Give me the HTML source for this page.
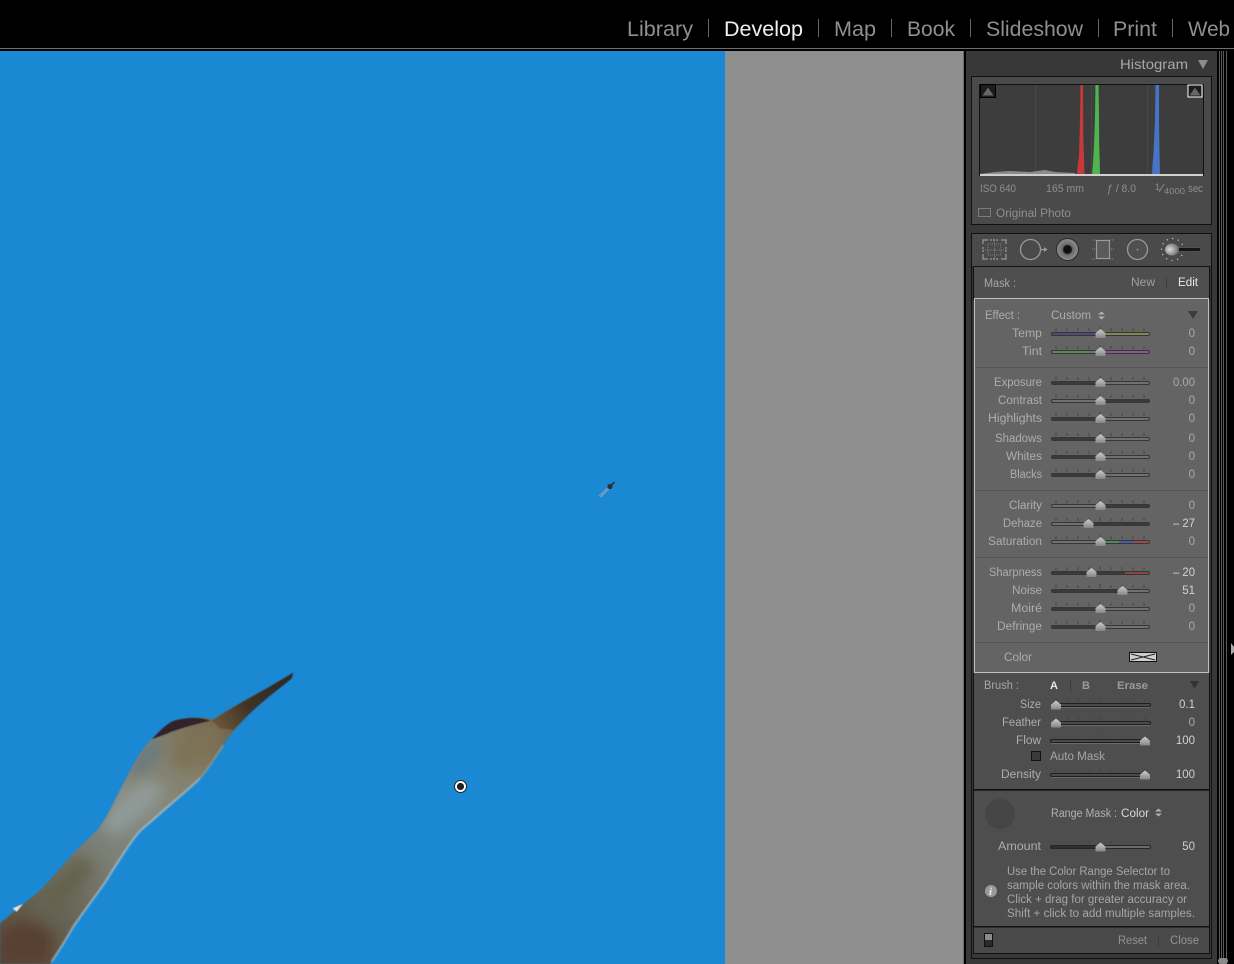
<!DOCTYPE html>
<html><head><meta charset="utf-8"><style>
html,body{margin:0;padding:0;background:#000;width:1234px;height:964px;overflow:hidden}
svg{display:block;filter:blur(.35px)}
text{font-family:"Liberation Sans",sans-serif;font-size:11.5px;fill:#adadad}
.l{text-anchor:end;fill:#adadad}
.v{text-anchor:end;fill:#a9a9a9}
.b{fill:#b2b2b2}
.n{font-size:21px;fill:#8f8f8f}
</style></head><body>
<svg width="1234" height="964" viewBox="0 0 1234 964" xmlns="http://www.w3.org/2000/svg">
<defs>
<linearGradient id="bg" gradientUnits="userSpaceOnUse" x1="0" y1="912" x2="700" y2="180"><stop offset="0" stop-color="#5a4737"/><stop offset=".22" stop-color="#666254"/><stop offset=".45" stop-color="#7b7f75"/><stop offset=".62" stop-color="#868a80"/><stop offset=".8" stop-color="#84806c"/><stop offset="1" stop-color="#6f6048"/></linearGradient>
<linearGradient id="bill" gradientUnits="userSpaceOnUse" x1="880" y1="40" x2="650" y2="190"><stop offset="0" stop-color="#2c2825"/><stop offset=".6" stop-color="#3d3228"/><stop offset="1" stop-color="#6a5636"/></linearGradient>
<linearGradient id="thumb" x1="0" y1="0" x2="0" y2="1"><stop offset="0" stop-color="#cfcfcf"/><stop offset="1" stop-color="#858585"/></linearGradient>
<radialGradient id="brushG" cx=".35" cy=".5" r=".7"><stop offset="0" stop-color="#dcdcdc"/><stop offset="1" stop-color="#5e5e5e"/></radialGradient>
<radialGradient id="eye" cx=".5" cy=".5" r=".5"><stop offset=".35" stop-color="#101010"/><stop offset=".5" stop-color="#6c6c6c"/><stop offset="1" stop-color="#8c8c8c"/></radialGradient>
<filter id="s" x="-50%" y="-50%" width="200%" height="200%"><feGaussianBlur stdDeviation="20"/></filter>
<filter id="s2" x="-20%" y="-20%" width="140%" height="140%"><feGaussianBlur stdDeviation="2"/></filter>
<filter id="s3" x="-5%" y="-5%" width="110%" height="110%"><feGaussianBlur stdDeviation="1.5"/></filter>
<clipPath id="birdClip"><path d="M880 38L875 55C840 85 790 120 745 165C715 195 690 225 670 255C650 285 630 320 600 355C570 385 520 425 470 470C440 497 425 505 410 525C390 550 350 610 320 660C290 705 250 755 220 800C200 835 185 860 150 912H0V790C40 755 80 725 110 700C150 665 195 605 230 570C265 535 285 520 300 500C320 470 335 440 345 420C360 390 395 320 420 280C435 260 445 248 455 238C480 212 505 188 530 180C560 172 610 170 640 178C680 150 760 105 800 85Z"/></clipPath>
<g id="th"><path d="M0-5L5-1V3Q5 4 4 4H-4Q-5 4-5 3V-1Z" fill="url(#thumb)"/></g>
<g id="tk" stroke="#444" stroke-width="1"><path d="M5 -6v3M16 -6v3M27 -6v3M38 -6v3M49 -7v4M60 -6v3M71 -6v3M82 -6v3M93 -6v3"/></g>
</defs>

<rect width="1234" height="964" fill="#000"/>
<rect x="0" y="48" width="1234" height="1" fill="#6e6e6e"/>
<rect x="0" y="51" width="725" height="913" fill="#1a88d2"/>
<rect x="725" y="51" width="238" height="913" fill="#8f8f8f"/>

<!-- nav -->
<text class="n" x="627" y="36" textLength="66" lengthAdjust="spacingAndGlyphs">Library</text>
<text class="n" x="724" y="36" textLength="79" lengthAdjust="spacingAndGlyphs" style="fill:#f0f0f0">Develop</text>
<text class="n" x="834" y="36" textLength="42" lengthAdjust="spacingAndGlyphs">Map</text>
<text class="n" x="907" y="36" textLength="48" lengthAdjust="spacingAndGlyphs">Book</text>
<text class="n" x="986" y="36" textLength="97" lengthAdjust="spacingAndGlyphs">Slideshow</text>
<text class="n" x="1113" y="36" textLength="44" lengthAdjust="spacingAndGlyphs">Print</text>
<text class="n" x="1188" y="36" textLength="42" lengthAdjust="spacingAndGlyphs">Web</text>
<g fill="#666"><rect x="708" y="19" width="1" height="18"/><rect x="818" y="19" width="1" height="18"/><rect x="891" y="19" width="1" height="18"/><rect x="970" y="19" width="1" height="18"/><rect x="1098" y="19" width="1" height="18"/><rect x="1172" y="19" width="1" height="18"/></g>

<!-- bird -->
<g transform="translate(0 660) scale(.33333)">
<g filter="url(#s3)">
<g clip-path="url(#birdClip)">
<rect x="0" y="0" width="930" height="912" fill="url(#bg)"/>
<path d="M455 238L420 280L380 350L430 340L500 260Z" fill="#66787f" filter="url(#s)"/>
<path d="M350 420L300 500L350 530L440 450L500 390L440 360Z" fill="#8f9a98" filter="url(#s)"/>
<path d="M670 200L620 195L540 235L500 300L560 335L630 280Z" fill="#7d7256" filter="url(#s)"/>
<path d="M0 912V810L80 780L160 820L150 912Z" fill="#584131" filter="url(#s)"/>
<path d="M100 720L230 590L290 620L180 760Z" fill="#65634f" filter="url(#s)"/>
</g>
<path d="M600 355C570 385 520 425 470 470C440 497 425 505 410 525C390 550 350 610 320 660C290 705 250 755 220 800C200 835 185 860 155 905" fill="none" stroke="#dfe2dc" stroke-width="4" opacity=".75" filter="url(#s2)"/>
<path d="M670 255C650 285 630 320 600 355" fill="none" stroke="#b5ad92" stroke-width="4" opacity=".7" filter="url(#s2)"/>
<path d="M880 38L875 55C840 85 790 120 745 165L700 210L660 205L635 182L720 130L800 85Z" fill="url(#bill)"/>
<path d="M455 238C480 212 505 185 530 180C560 172 600 170 632 182C590 192 530 208 500 222Z" fill="#33222a"/>
<path d="M38 745L68 732L50 755Z" fill="#e8e8e0"/>
</g>
</g>

<!-- overlays -->
<circle cx="460.500" cy="786.500" r="6" fill="#fff" stroke="#222" stroke-width="1"/>
<circle cx="460.500" cy="786.500" r="3.600" fill="#222"/>
<path d="M600 496.500L608 488.500" stroke="#a5bccc" stroke-width="2.400"/>
<path d="M600 496.500L608 488.500" stroke="#3a5c7a" stroke-width=".7"/>
<circle cx="610" cy="486.500" r="2.600" fill="#26323e"/>
<path d="M610 486.500L614.500 482" stroke="#26323e" stroke-width="1.600"/>

<!-- sidebar -->
<rect x="963" y="49" width="271" height="915" fill="#000"/>
<rect x="966" y="51" width="251" height="913" fill="#383838"/>
<rect x="963" y="51" width="1" height="913" fill="#6a6a6a"/>
<g fill="#5c5c5c"><rect x="1219" y="51" width="1" height="913"/><rect x="1221" y="51" width="1" height="913"/><rect x="1223" y="51" width="1" height="913"/><rect x="1226" y="51" width="1" height="913"/></g>
<path d="M1231 643L1234 647V652L1231 655Z" fill="#aaa"/>
<rect x="1218" y="958" width="10" height="6" rx="3" fill="#8a8a8a"/>

<text x="1120" y="69" textLength="68" lengthAdjust="spacingAndGlyphs" style="font-size:14px;fill:#a8a8a8">Histogram</text>
<path d="M1198 60H1208L1203 69Z" fill="#8c8c8c"/>

<!-- histogram panel -->
<rect x="971.500" y="76.500" width="240" height="148" fill="#4a4a4a" stroke="#111"/>
<rect x="979.500" y="84.500" width="224" height="91" fill="#3d3d3d" stroke="#111"/>
<g fill="#484848"><rect x="1035" y="85" width="1" height="90"/><rect x="1091" y="85" width="1" height="90"/><rect x="1147" y="85" width="1" height="90"/></g>
<path d="M980 174L995 172L1010 171L1030 172L1045 170L1055 172L1075 173V175H980Z" fill="#8b8b8b"/>
<path d="M1077 175L1078 163L1079 157L1079.500 138L1080 120L1080.500 85H1083L1083.300 138L1084 157L1084.500 175Z" fill="#c83a3a"/>
<path d="M1092 175L1093 163L1094 145L1095 117L1095.500 85H1098.500L1099 117L1099.200 145L1099.800 163L1100 175Z" fill="#4fb64f"/>
<path d="M1152 175L1152.500 165L1153.500 153L1155 120L1155.500 85H1159L1159 120L1159.500 153L1160 175Z" fill="#4874c8"/>
<rect x="980" y="174" width="223" height="2" fill="#cfcfcf"/>
<rect x="980.500" y="84.500" width="15" height="13" fill="#1c1c1c" stroke="#000"/>
<path d="M982.500 95.500L988 87.500L993.500 95.500Z" fill="#666"/>
<rect x="1188" y="85" width="14" height="12" fill="#1c1c1c" stroke="#fff"/>
<path d="M1189.500 95.500L1195 87.500L1200.500 95.500Z" fill="#666"/>
<text x="980" y="192" textLength="36" lengthAdjust="spacingAndGlyphs" style="font-size:11px;fill:#8f8f8f">ISO 640</text>
<text x="1046" y="192" textLength="38" lengthAdjust="spacingAndGlyphs" style="font-size:11px;fill:#8f8f8f">165 mm</text>
<text x="1107" y="192" textLength="29" lengthAdjust="spacingAndGlyphs" style="font-size:11px;fill:#8f8f8f">ƒ / 8.0</text>
<text x="1155" y="190" style="font-size:9px;fill:#8f8f8f">1</text>
<path d="M1159 192L1164 184" stroke="#8f8f8f" stroke-width=".8"/>
<text x="1164" y="194" textLength="21" lengthAdjust="spacingAndGlyphs" style="font-size:8px;fill:#8f8f8f">4000</text>
<text x="1188" y="192" textLength="15" lengthAdjust="spacingAndGlyphs" style="font-size:11px;fill:#8f8f8f">sec</text>
<rect x="978.500" y="208.500" width="12" height="8" fill="none" stroke="#7c7c7c"/>
<text x="996" y="217" textLength="75" lengthAdjust="spacingAndGlyphs" style="font-size:11.500px;fill:#8f8f8f">Original Photo</text>

<!-- tool strip -->
<rect x="971.500" y="233.500" width="240" height="725" fill="#383838" stroke="#111"/>
<rect x="972" y="234" width="239" height="32" fill="#4a4a4a"/>
<g fill="none" stroke="#9a9a9a">
<path d="M983 244v-4h5M1001 240h5v4M983 254v5h5M1001 259h5v-5" stroke-width="1.200"/>
<path d="M990 240h9M990 259h9M983 247v5M1006 247v5" stroke-width="1.200" stroke-dasharray="2 1"/>
<path d="M988 244h13v11h-13zM983 250h23M994.500 240v19" stroke-width="1" stroke-dasharray="1 1" opacity=".65"/>
<circle cx="1030.500" cy="249.500" r="10" stroke-width="1.300"/>
<path d="M1041 249.500h4" stroke-width="1.200"/>
</g>
<path d="M1044 247L1047.500 249.500L1044 252Z" fill="#9a9a9a"/>
<circle cx="1067.500" cy="249.500" r="11.500" fill="#2a2a2a"/>
<circle cx="1067.500" cy="249.500" r="10.500" fill="url(#eye)"/>
<rect x="1096.500" y="240.500" width="13" height="18" fill="#5a5a5a" stroke="#9a9a9a" stroke-width="1.200"/>
<path d="M1092 240h4M1110 240h4M1092 259h4M1110 259h4M1092 249h3M1111 249h3" stroke="#8a8a8a" stroke-dasharray="1 1"/>
<circle cx="1137.500" cy="249.500" r="10" fill="#505050" stroke="#9a9a9a" stroke-width="1.300"/>
<circle cx="1137.500" cy="249.500" r=".8" fill="#aaa"/>
<circle cx="1172.500" cy="249.500" r="11" fill="none" stroke="#e0e0e0" stroke-width="1.200" stroke-dasharray="1 4.700"/>
<rect x="1178" y="247.500" width="23" height="4" rx="2" fill="#151515" stroke="#777" stroke-width=".6"/>
<ellipse cx="1172" cy="249.500" rx="7" ry="6" fill="url(#brushG)"/>

<!-- mask header -->
<rect x="973.500" y="266.500" width="236" height="33" fill="#4f4f4f" stroke="#111"/>
<text x="984" y="287" textLength="32" lengthAdjust="spacingAndGlyphs" style="fill:#a6a6a6">Mask :</text>
<text x="1131" y="286" textLength="24" lengthAdjust="spacingAndGlyphs" style="fill:#a0a0a0">New</text>
<rect x="1166" y="278" width="1" height="11" fill="#3d3d3d"/>
<text x="1178" y="286" textLength="20" lengthAdjust="spacingAndGlyphs" style="fill:#e8e8e8">Edit</text>

<!-- effect panel -->
<rect x="974.500" y="298.500" width="234" height="374" fill="#646464" stroke="#c0c0c0"/>
<g fill="#555"><rect x="975" y="367" width="233" height="1"/><rect x="975" y="490" width="233" height="1"/><rect x="975" y="557" width="233" height="1"/><rect x="975" y="642" width="233" height="1"/></g>
<text x="985" y="319" textLength="35" lengthAdjust="spacingAndGlyphs">Effect :</text>
<text x="1051" y="319" textLength="40" lengthAdjust="spacingAndGlyphs">Custom</text>
<path d="M1098 314.500L1101.500 311.500L1105 314.500ZM1098 316.500L1101.500 319.500L1105 316.500Z" fill="#b0b0b0"/>
<path d="M1188 311H1198L1193 319Z" fill="#3c3c3c"/>

<!-- labels -->
<text class="l" x="1042" y="337" textLength="30" lengthAdjust="spacingAndGlyphs">Temp</text>
<text class="l" x="1042" y="355" textLength="20" lengthAdjust="spacingAndGlyphs">Tint</text>
<text class="l" x="1042" y="386" textLength="48" lengthAdjust="spacingAndGlyphs">Exposure</text>
<text class="l" x="1042" y="404" textLength="44" lengthAdjust="spacingAndGlyphs">Contrast</text>
<text class="l" x="1042" y="422" textLength="54" lengthAdjust="spacingAndGlyphs">Highlights</text>
<text class="l" x="1042" y="442" textLength="47" lengthAdjust="spacingAndGlyphs">Shadows</text>
<text class="l" x="1042" y="460" textLength="36" lengthAdjust="spacingAndGlyphs">Whites</text>
<text class="l" x="1042" y="478" textLength="32" lengthAdjust="spacingAndGlyphs">Blacks</text>
<text class="l" x="1042" y="509" textLength="33" lengthAdjust="spacingAndGlyphs">Clarity</text>
<text class="l" x="1042" y="527" textLength="39" lengthAdjust="spacingAndGlyphs">Dehaze</text>
<text class="l" x="1042" y="545" textLength="54" lengthAdjust="spacingAndGlyphs">Saturation</text>
<text class="l" x="1042" y="576" textLength="53" lengthAdjust="spacingAndGlyphs">Sharpness</text>
<text class="l" x="1042" y="594" textLength="30" lengthAdjust="spacingAndGlyphs">Noise</text>
<text class="l" x="1042" y="612" textLength="31" lengthAdjust="spacingAndGlyphs">Moiré</text>
<text class="l" x="1042" y="630" textLength="45" lengthAdjust="spacingAndGlyphs">Defringe</text>
<text class="l" x="1032" y="661" textLength="28" lengthAdjust="spacingAndGlyphs">Color</text>

<text class="v" x="1195" y="337">0</text><text class="v" x="1195" y="355">0</text>
<text class="v" x="1195" y="386" textLength="22" lengthAdjust="spacingAndGlyphs">0.00</text>
<text class="v" x="1195" y="404">0</text><text class="v" x="1195" y="422">0</text><text class="v" x="1195" y="442">0</text><text class="v" x="1195" y="460">0</text><text class="v" x="1195" y="478">0</text><text class="v" x="1195" y="509">0</text>
<text class="v" x="1195" y="527" textLength="22" lengthAdjust="spacingAndGlyphs" style="fill:#d4d4d4">– 27</text>
<text class="v" x="1195" y="545">0</text>
<text class="v" x="1195" y="576" textLength="22" lengthAdjust="spacingAndGlyphs" style="fill:#d4d4d4">– 20</text>
<text class="v" x="1195" y="594" style="fill:#d4d4d4">51</text>
<text class="v" x="1195" y="612">0</text><text class="v" x="1195" y="630">0</text>

<!-- sliders: tracks -->
<g stroke="#363636" stroke-width="1">
<rect x="1051.500" y="332.500" width="98" height="3" rx="1.500" fill="#86864e"/>
<rect x="1051.500" y="332.500" width="49" height="3" rx="1.500" fill="#4c4c78"/>
<rect x="1051.500" y="350.500" width="98" height="3" rx="1.500" fill="#95508f"/>
<rect x="1051.500" y="350.500" width="49" height="3" rx="1.500" fill="#558a5a"/>
<rect x="1051.500" y="381.500" width="98" height="3" rx="1.500" fill="#707070"/><rect x="1051.500" y="381.500" width="49" height="3" rx="1.500" fill="#3a3a3a"/>
<rect x="1051.500" y="399.500" width="98" height="3" rx="1.500" fill="#3a3a3a"/><rect x="1051.500" y="399.500" width="49" height="3" rx="1.500" fill="#707070"/>
<rect x="1051.500" y="417.500" width="98" height="3" rx="1.500" fill="#707070"/><rect x="1051.500" y="417.500" width="49" height="3" rx="1.500" fill="#3a3a3a"/>
<rect x="1051.500" y="437.500" width="98" height="3" rx="1.500" fill="#707070"/><rect x="1051.500" y="437.500" width="49" height="3" rx="1.500" fill="#3a3a3a"/>
<rect x="1051.500" y="455.500" width="98" height="3" rx="1.500" fill="#707070"/><rect x="1051.500" y="455.500" width="49" height="3" rx="1.500" fill="#3a3a3a"/>
<rect x="1051.500" y="473.500" width="98" height="3" rx="1.500" fill="#707070"/><rect x="1051.500" y="473.500" width="49" height="3" rx="1.500" fill="#3a3a3a"/>
<rect x="1051.500" y="504.500" width="98" height="3" rx="1.500" fill="#3a3a3a"/><rect x="1051.500" y="504.500" width="49" height="3" rx="1.500" fill="#707070"/>
<rect x="1051.500" y="522.500" width="98" height="3" rx="1.500" fill="#3a3a3a"/><rect x="1051.500" y="522.500" width="38" height="3" rx="1.500" fill="#707070"/>
<rect x="1051.500" y="540.500" width="98" height="3" rx="1.500" fill="#707070"/><rect x="1105" y="541" width="14" height="2" fill="#4c8a60" stroke="none"/><rect x="1119" y="541" width="15" height="2" fill="#4c5aa0" stroke="none"/><rect x="1134" y="541" width="15" height="2" fill="#a04a50" stroke="none"/>
<rect x="1051.500" y="571.500" width="98" height="3" rx="1.500" fill="#3a3a3a"/><rect x="1125" y="572" width="24" height="2" fill="#8a4444" stroke="none"/>
<rect x="1051.500" y="589.500" width="98" height="3" rx="1.500" fill="#707070"/><rect x="1051.500" y="589.500" width="71" height="3" rx="1.500" fill="#3a3a3a"/>
<rect x="1051.500" y="607.500" width="98" height="3" rx="1.500" fill="#707070"/><rect x="1051.500" y="607.500" width="49" height="3" rx="1.500" fill="#3a3a3a"/>
<rect x="1051.500" y="625.500" width="98" height="3" rx="1.500" fill="#707070"/><rect x="1051.500" y="625.500" width="49" height="3" rx="1.500" fill="#3a3a3a"/>
</g>
<use href="#tk" x="1051" y="334"/><use href="#tk" x="1051" y="352"/><use href="#tk" x="1051" y="383"/><use href="#tk" x="1051" y="401"/><use href="#tk" x="1051" y="419"/><use href="#tk" x="1051" y="439"/><use href="#tk" x="1051" y="457"/><use href="#tk" x="1051" y="475"/><use href="#tk" x="1051" y="506"/><use href="#tk" x="1051" y="524"/><use href="#tk" x="1051" y="542"/><use href="#tk" x="1051" y="573"/><use href="#tk" x="1051" y="591"/><use href="#tk" x="1051" y="609"/><use href="#tk" x="1051" y="627"/>
<use href="#th" x="1100.500" y="334"/><use href="#th" x="1100.500" y="352"/><use href="#th" x="1100.500" y="383"/><use href="#th" x="1100.500" y="401"/><use href="#th" x="1100.500" y="419"/><use href="#th" x="1100.500" y="439"/><use href="#th" x="1100.500" y="457"/><use href="#th" x="1100.500" y="475"/><use href="#th" x="1100.500" y="506"/><use href="#th" x="1088.500" y="524"/><use href="#th" x="1100.500" y="542"/><use href="#th" x="1091.500" y="573"/><use href="#th" x="1122.500" y="591"/><use href="#th" x="1100.500" y="609"/><use href="#th" x="1100.500" y="627"/>

<!-- color chip -->
<rect x="1129.500" y="652.500" width="27" height="9" fill="#cfcfcf" stroke="#111"/>
<path d="M1131 654L1143 657L1155 654M1131 660L1143 657L1155 660" fill="none" stroke="#222" stroke-width="1"/>

<!-- brush -->
<rect x="974" y="673" width="235" height="116" fill="#4e4e4e"/>
<rect x="973" y="789" width="237" height="1.500" fill="#111"/>
<text x="984" y="689" textLength="35" lengthAdjust="spacingAndGlyphs" style="fill:#a6a6a6">Brush :</text>
<text x="1050" y="689" style="font-weight:bold;fill:#e8e8e8;font-size:11px">A</text>
<rect x="1070" y="680" width="1" height="11" fill="#3a3a3a"/>
<text x="1082" y="689" style="font-weight:bold;fill:#9a9a9a;font-size:11px">B</text>
<text x="1117" y="689" textLength="31" lengthAdjust="spacingAndGlyphs" style="font-weight:bold;fill:#9a9a9a;font-size:11px">Erase</text>
<path d="M1190 681H1199L1194.500 689Z" fill="#333"/>
<text class="l" x="1041" y="708" textLength="21" lengthAdjust="spacingAndGlyphs">Size</text>
<text class="l" x="1041" y="726" textLength="39" lengthAdjust="spacingAndGlyphs">Feather</text>
<text class="l" x="1041" y="744" textLength="25" lengthAdjust="spacingAndGlyphs">Flow</text>
<text class="l" x="1041" y="778" textLength="40" lengthAdjust="spacingAndGlyphs">Density</text>
<text class="v" x="1195" y="708" style="fill:#d0d0d0">0.1</text>
<text class="v" x="1195" y="726" style="fill:#a9a9a9">0</text>
<text class="v" x="1195" y="744" style="fill:#d0d0d0">100</text>
<text class="v" x="1195" y="778" style="fill:#d0d0d0">100</text>
<rect x="1031.500" y="751.500" width="9" height="9" fill="#3a3a3a" stroke="#111"/>
<text x="1050" y="760" textLength="55" lengthAdjust="spacingAndGlyphs" style="fill:#a6a6a6">Auto Mask</text>

<!-- range mask -->
<rect x="974" y="791" width="235" height="135" fill="#4e4e4e"/>
<circle cx="1000" cy="814" r="15" fill="#454545"/>
<text x="1051" y="817" textLength="66" lengthAdjust="spacingAndGlyphs" style="fill:#b0b0b0">Range Mask :</text>
<text x="1121" y="817" textLength="28" lengthAdjust="spacingAndGlyphs" style="fill:#d8d8d8">Color</text>
<path d="M1155 811.500L1158.500 808.500L1162 811.500ZM1155 813.500L1158.500 816.500L1162 813.500Z" fill="#b0b0b0"/>
<text class="l" x="1041" y="850" textLength="43" lengthAdjust="spacingAndGlyphs">Amount</text>
<text class="v" x="1195" y="850" style="fill:#d0d0d0">50</text>
<text x="1007" y="875" textLength="163" lengthAdjust="spacingAndGlyphs" style="fill:#a6a6a6">Use the Color Range Selector to</text>
<text x="1007" y="889" textLength="183" lengthAdjust="spacingAndGlyphs" style="fill:#a6a6a6">sample colors within the mask area.</text>
<text x="1007" y="903" textLength="180" lengthAdjust="spacingAndGlyphs" style="fill:#a6a6a6">Click + drag for greater accuracy or</text>
<text x="1007" y="917" textLength="188" lengthAdjust="spacingAndGlyphs" style="fill:#a6a6a6">Shift + click to add multiple samples.</text>
<circle cx="991" cy="891" r="6" fill="#9a9a9a"/>
<text x="989" y="895" style="font-family:'Liberation Serif',serif;font-style:italic;font-weight:bold;font-size:11px;fill:#f0f0f0">i</text>

<!-- brush/range sliders -->
<g stroke="#1f1f1f" stroke-width="1" fill="#4a4a4a">
<rect x="1051.500" y="703.500" width="99" height="3" rx="1.500"/><rect x="1051.500" y="721.500" width="99" height="3" rx="1.500"/><rect x="1050.500" y="739.500" width="99" height="3" rx="1.500"/><rect x="1050.500" y="773.500" width="99" height="3" rx="1.500"/>
<rect x="1050.500" y="845.500" width="100" height="3" rx="1.500" fill="#6c6c6c" stroke="#262626"/><rect x="1050.500" y="845.500" width="50" height="3" rx="1.500" fill="#303030" stroke="#262626"/>
</g>
<g fill="#6a6a6a"><rect x="1052" y="707" width="98" height="1"/><rect x="1052" y="725" width="98" height="1"/><rect x="1051" y="743" width="98" height="1"/><rect x="1051" y="777" width="98" height="1"/></g>
<use href="#tk" x="1052" y="705"/><use href="#tk" x="1052" y="723"/><use href="#tk" x="1051" y="741"/><use href="#tk" x="1051" y="775"/><use href="#tk" x="1051" y="847"/>
<use href="#th" x="1056" y="705.500"/><use href="#th" x="1056" y="723.500"/><use href="#th" x="1145" y="741.500"/><use href="#th" x="1145" y="775.500"/><use href="#th" x="1100.500" y="847.500"/>

<!-- footer -->
<rect x="973" y="926" width="237" height="1.500" fill="#111"/>
<rect x="974" y="927.500" width="235" height="26" fill="#4a4a4a"/>
<rect x="973" y="953" width="237" height="1" fill="#111"/>
<rect x="973" y="673" width="1" height="281" fill="#111"/>
<rect x="1209" y="673" width="1" height="281" fill="#111"/>
<rect x="984.500" y="933.500" width="8" height="13" fill="#2a2a2a" stroke="#111"/>
<rect x="985" y="934" width="7" height="6" fill="#8a8a8a"/>
<text x="1118" y="944" textLength="29" lengthAdjust="spacingAndGlyphs" style="fill:#929292">Reset</text>
<rect x="1158" y="935" width="1" height="11" fill="#3c3c3c"/>
<text x="1170" y="944" textLength="29" lengthAdjust="spacingAndGlyphs" style="fill:#929292">Close</text>
</svg>
</body></html>
